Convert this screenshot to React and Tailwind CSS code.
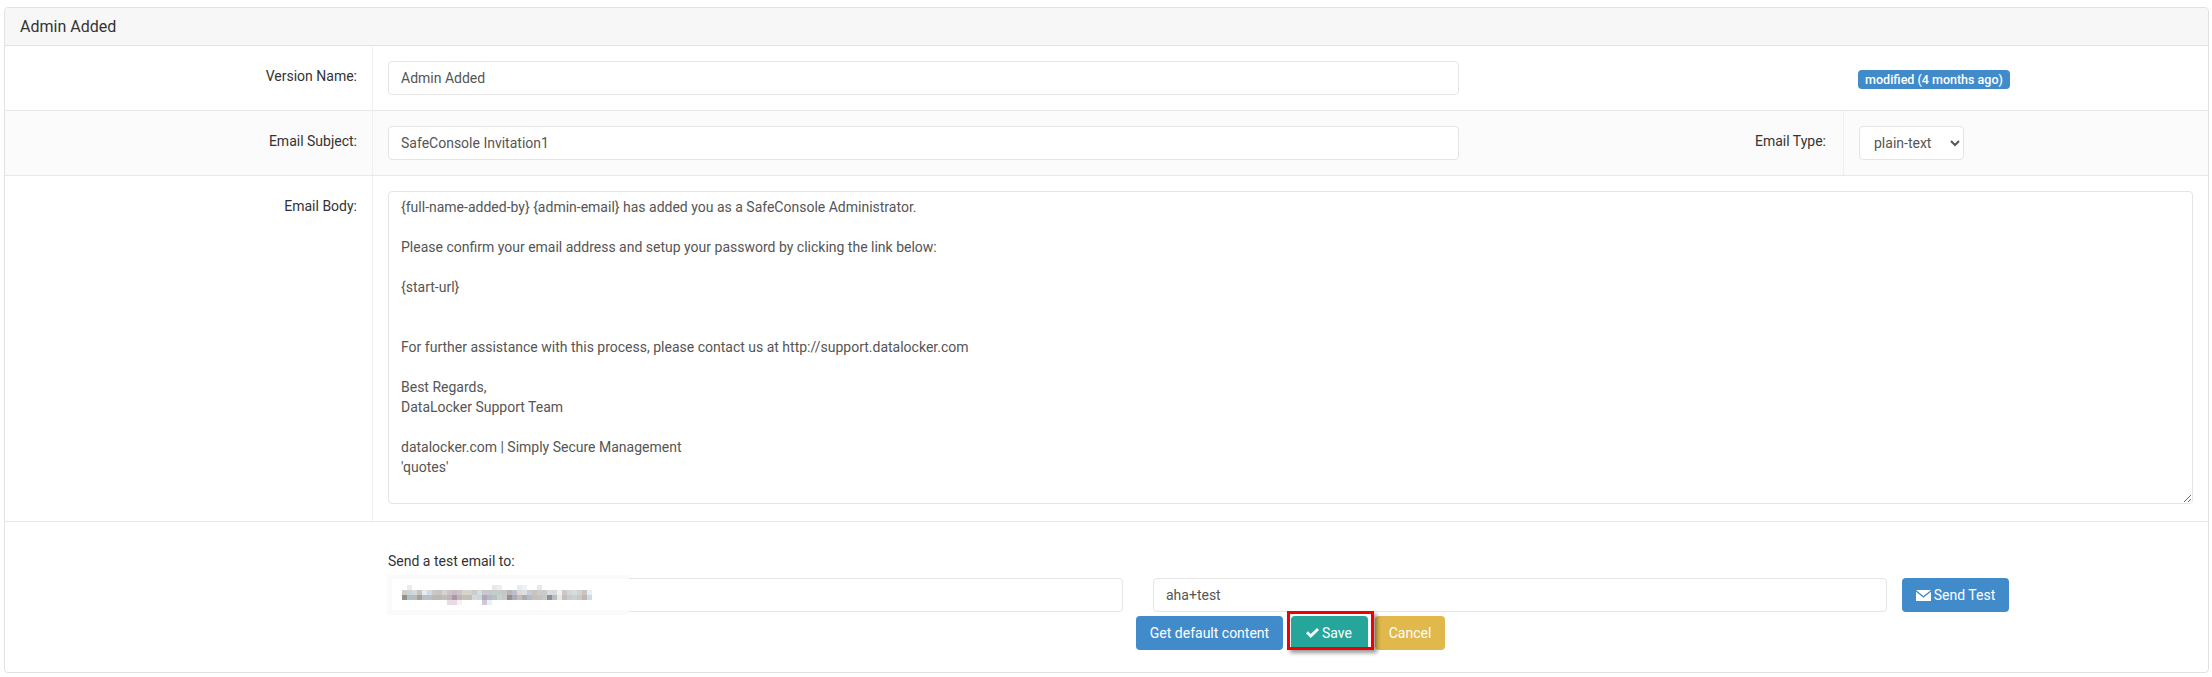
const font = "font-['Roboto',sans-serif]";
const control = 'h-[34px] rounded border border-[#e5e5e5] bg-white px-3 text-sm text-[#555] outline-none';
const blue = 'flex h-[34px] items-center justify-center rounded bg-[#428bca] text-sm text-white';

const bodyText = `{full-name-added-by} {admin-email} has added you as a SafeConsole Administrator.

Please confirm your email address and setup your password by clicking the link below:

{start-url}


For further assistance with this process, please contact us at http://support.datalocker.com

Best Regards,
DataLocker Support Team

datalocker.com | Simply Secure Management
'quotes'`;

// the redacted address, drawn as the mosaic it is in the picture
const mosaicTop = { 1: '#e8ecec', 18: '#e8e8e8', 19: '#eeeeee', 23: '#e4ecf4', 24: '#eef2f8', 27: '#e8e8e8' };
const mosaicUpper = ['#d0ccc8', '#c8d4d8', '#d8d8d8', '#c8c4bc', '#e4ecf0', '#d4d8e0', '#ccc8c0', '#c8c4c4', '#d4d4d4', '#ccc4c8', '#c8bcc4', '#ccc4c8', '#d8d4cc', '#d4d4cc', '#ccccc8', '#d4dcdc', '#ccc4d0', '#c8c8cc', '#c4ccc8', '#c4ccc8', '#c4c8c4', '#b8b4b8', '#bcc0c8', '#e4d8cc', '#dce0e4', '#c8ccd0', '#c4c4c0', '#ccccc8', '#c8ccc8', '#dcdcdc', '#d4dcdc', '#f0f0f0', '#ccc8c8', '#d8d4d8', '#d8dce0', '#d0d4cc', '#c8c4c0', '#e4eff8'];
const mosaicLower = ['#989088', '#a4c4cc', '#b8bcc0', '#a8a494', '#b8c0cc', '#b8c0cc', '#bcb8b8', '#c0b8b0', '#c4bcb8', '#c0b4bc', '#a898a8', '#c0b4bc', '#c4c0b4', '#c0c0b4', '#d0dcdc', '#c8d8dc', '#b0a8b8', '#b4bcbc', '#b4c4c4', '#c8d0d0', '#c8c8c8', '#989088', '#a8acbc', '#c8bcb0', '#a8acac', '#b0bcc8', '#c4c0bc', '#c4c4bc', '#c8c8c4', '#8c9098', '#b4c0c8', '#ece8e0', '#c4bcc0', '#c8ccd0', '#ccd0d0', '#c4ccc4', '#ccb0b0', '#c8dcec'];
const mosaicBottom = { 9: '#e8dce4', 10: '#e8dce4', 11: '#f4f4f8', 16: '#d0c8d4', 17: '#ecf0f4' };

function Row({ label, children, shade, height }) {
  return (
    <div className={`flex border-b border-[#e8e8e8] ${shade ? 'bg-[#fbfbfb]' : 'bg-white'} ${height}`}>
      <div className="w-[368px] shrink-0 border-r border-[#f0f0f0] pr-[15px] pt-[22px] text-right text-sm leading-[17px] text-[#333]">
        {label}
      </div>
      {children}
    </div>
  );
}

function Mosaic() {
  const cell = (x, y, fill) => <rect key={`${x}-${y}`} x={x} y={y} width="1" height="1" fill={fill} />;
  return (
    <svg width="190" height="20" viewBox="0 0 38 4" preserveAspectRatio="none" className="ml-[10px] mt-[6px]" shapeRendering="crispEdges">
      {Object.entries(mosaicTop).map(([x, fill]) => cell(x, 0, fill))}
      {mosaicUpper.map((fill, x) => cell(x, 1, fill))}
      {mosaicLower.map((fill, x) => cell(x, 2, fill))}
      {Object.entries(mosaicBottom).map(([x, fill]) => cell(x, 3, fill))}
    </svg>
  );
}

export default function App() {
  return (
    <div className={`h-[677px] bg-white pl-[4px] pr-[3px] pt-[7px] ${font}`}>
      <div className="rounded border border-[#e2e2e2] bg-white">
        <div className="h-[38px] rounded-t border-b border-[#e2e2e2] bg-[#f7f7f7] pl-[15px] pt-[10px] text-base leading-[18px] text-[#333]">
          Admin Added
        </div>

        <Row label="Version Name:" height="h-[65px]">
          <div className="flex flex-1 justify-between pl-[15px] pt-[15px]">
            <input className={`${control} w-[1071px]`} defaultValue="Admin Added" />
            <div className="w-[365px] pl-[15px] pt-[6px]">
              <span className="inline-block h-[19px] w-[152px] rounded-[4px] bg-[#428bca] text-center text-[12.5px] font-medium leading-[19px] text-white">
                modified (4 months ago)
              </span>
            </div>
          </div>
        </Row>

        <Row label="Email Subject:" shade height="h-[65px]">
          <div className="flex flex-1 justify-between pl-[15px] pt-[15px]">
            <input className={`${control} w-[1071px]`} defaultValue="SafeConsole Invitation1" />
            <div className="flex">
              <div className="pr-[17px] pt-[7px] text-sm leading-[17px] text-[#333]">Email Type:</div>
              <div className="-mt-[15px] w-[365px] border-l border-[#f0f0f0] pl-[15px] pt-[15px]">
                <select className={`${control} w-[105px] pl-[10px] pr-0`} defaultValue="plain-text">
                  <option>plain-text</option>
                </select>
              </div>
            </div>
          </div>
        </Row>

        <Row label="Email Body:" height="h-[346px]">
          <div className="flex-1 pl-[15px] pr-[15px] pt-[15px]">
            <textarea
              className="block h-[313px] w-full rounded border border-[#e5e5e5] bg-white px-3 pb-[6px] pt-[5px] text-sm leading-5 text-[#555] outline-none"
              defaultValue={bodyText}
            />
          </div>
        </Row>

        <div className="h-[150px] pl-[383px] pt-[29px] text-sm text-[#333]">
          <div className="leading-5">Send a test email to:</div>
          <div className="mt-[7px] flex">
            <div className="relative w-[735px]">
              <input className={`${control} w-full`} />
              <div className="absolute -left-[1px] -top-[3px] h-10 w-[242px] border-y-[4px] border-b-[5px] border-l-[5px] border-[#fafafa] bg-white">
                <Mosaic />
              </div>
            </div>
            <input className={`${control} ml-[30px] w-[734px]`} defaultValue="aha+test" />
            <button className={`${blue} ml-[15px] w-[107px] gap-[3px]`}>
              <svg width="15" height="11" viewBox="0 0 15 11" fill="currentColor">
                <path d="M0 0h15L7.500 6zM0 1.800l7.500 6 7.500-6V11H0z" />
              </svg>
              Send Test
            </button>
          </div>
          <div className="mt-[4px] flex gap-[7.5px] pl-[748px]">
            <button className={`${blue} w-[147px]`}>Get default content</button>
            <button className="relative flex h-[34px] w-[77px] items-center justify-center gap-[3px] rounded bg-[#26a69a] text-sm text-white">
              <svg width="13" height="10" viewBox="0 0 13 10" fill="currentColor">
                <path d="M0 5.200 1.900 3.200 4.800 6 11.100 0 13 2 4.800 10z" />
              </svg>
              Save
              <span className="absolute -bottom-[0px] -left-[4px] -right-[6px] -top-[5px] border-[3px] border-[#f00000] shadow-[3px_3px_4px_rgba(0,0,0,0.4)]" />
            </button>
            <button className="flex h-[34px] w-[70px] items-center justify-center rounded bg-[#e0b84b] text-sm text-white">Cancel</button>
          </div>
        </div>
      </div>
    </div>
  );
}
